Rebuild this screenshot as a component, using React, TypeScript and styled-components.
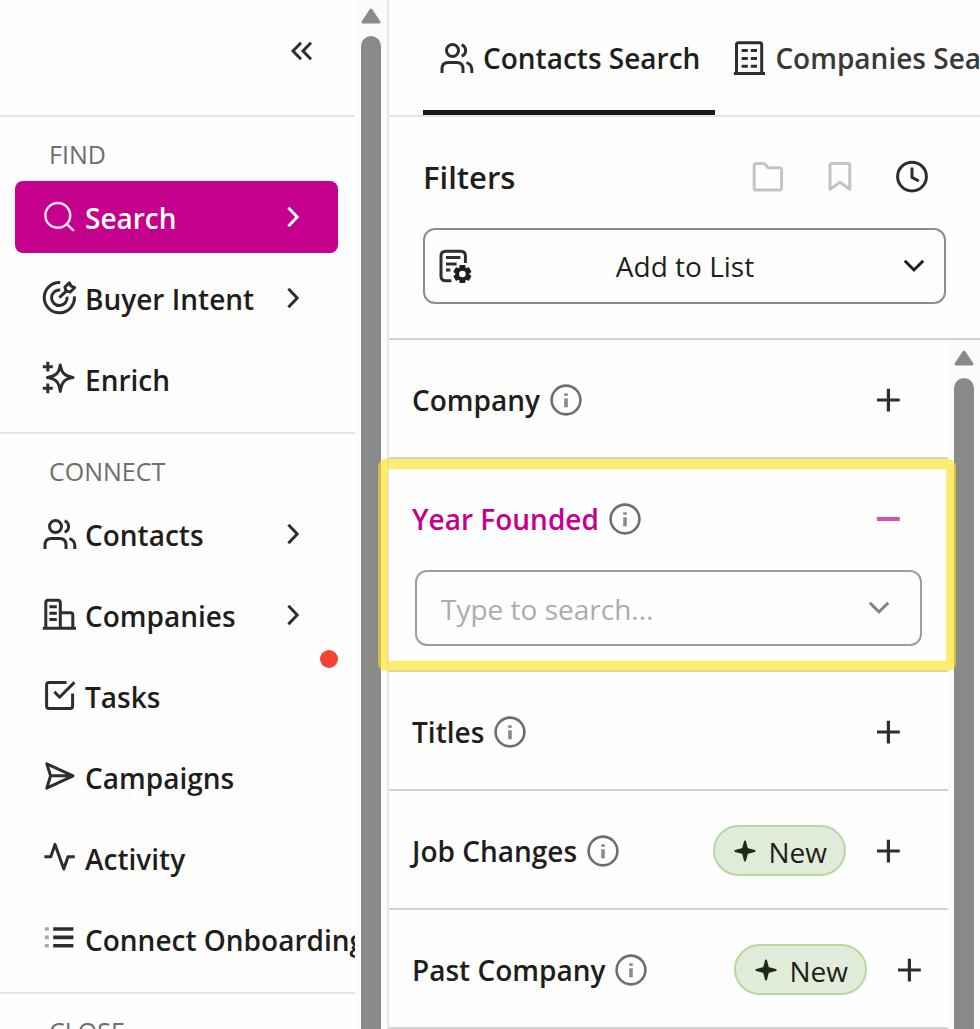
import React from "react";
import styled, { createGlobalStyle, css } from "styled-components";

const color = {
  ink: "#1f1e1c",
  icon: "#2f2e2b",
  muted: "#6f6e69",
  faint: "#c4c3bf",
  magenta: "#c4008c",
  line: "#e6e5e0",
  rowLine: "#d3d2cc",
  field: "#8f8b86",
  track: "#fbfbfb",
  thumb: "#8a8a8a",
};

const GlobalStyle = createGlobalStyle`
  * { box-sizing: border-box; }
  body {
    margin: 0;
    background: #fefefe;
    color: ${color.ink};
    font-family: "Open Sans", "Noto Sans", sans-serif;
    font-size: 28px;
    line-height: 36px;
  }
  button, input { font: inherit; color: inherit; }
  svg { display: block; flex: none; }
`;

const Shell = styled.div`
  display: flex;
  height: 100vh;
  overflow: hidden;
`;

/* ---------- scroll bars ---------- */

const Track = styled.div<{ $edge?: boolean; $top: number }>`
  flex: none;
  display: flex;
  flex-direction: column;
  align-items: center;
  gap: 12px;
  width: ${(p) => (p.$edge ? 34 : 32)}px;
  padding-top: ${(p) => p.$top}px;
  background: ${color.track};
  border-right: ${(p) => (p.$edge ? `2px solid ${color.line}` : "none")};
`;

const Thumb = styled.div`
  flex: 1;
  width: 20px;
  border-radius: 10px 10px 0 0;
  background: ${color.thumb};
`;

function ScrollBar({ edge, top }: { edge?: boolean; top: number }) {
  return (
    <Track $edge={edge} $top={top} aria-hidden="true">
      <svg width="20" height="16" viewBox="0 0 20 16">
        <path d="M10 2 L18 14 H2 Z" fill={color.thumb} stroke={color.thumb} strokeWidth="3" strokeLinejoin="round" />
      </svg>
      <Thumb />
    </Track>
  );
}

/* ---------- icons ---------- */

const Svg = styled.svg.attrs({ width: 36, height: 36, viewBox: "0 0 36 36", "aria-hidden": true })<{
  $tone?: string;
  $weight?: number;
}>`
  fill: none;
  stroke: ${(p) => p.$tone ?? color.icon};
  stroke-width: ${(p) => p.$weight ?? 3};
  stroke-linejoin: round;
`;

const SearchIcon = () => (
  <Svg $tone="#fbe0f2" $weight={2.5}>
    <circle cx="15.8" cy="16.4" r="12.4" />
    <path d="M25 25.4 L31.2 31.2" strokeLinecap="round" />
  </Svg>
);

const TargetIcon = () => (
  <Svg>
    <path d="M18.2 2.6 A15.1 15.1 0 1 0 32.4 16.4" />
    <path d="M18.2 10 A7.8 7.8 0 1 0 25.1 16.8" />
    <path d="M17.3 17.7 L25 10.4" />
    <path d="M24 10.9 L22.9 7 L27.4 2.8 L29 6 L32.6 7.7 L28.2 12 Z" />
  </Svg>
);

const SparklesIcon = () => (
  <Svg>
    <path d="M18.3 4 C19.6 12 22.4 15 31 16.4 C22.4 17.8 19.6 21 18.3 30.4 C17 21 14.2 17.8 5.4 16.4 C14.2 15 17 12 18.3 4 Z" />
    <path d="M5.8 0.8 V10.6 M0.8 5.7 H10.8 M5.8 22.4 V32.2 M0.8 27.3 H10.8" />
  </Svg>
);

const UsersIcon = () => (
  <Svg>
    <circle cx="13.5" cy="10.5" r="6" />
    <path d="M3 33 V29 Q3 22.4 9.4 22.4 H17.6 Q24 22.4 24 29 V33" />
    <path d="M22.6 4.9 A6 6 0 0 1 22.6 16.2 M27.4 22.6 Q32.6 24 32.8 29.4 V33" />
  </Svg>
);

const CompanyIcon = () => (
  <Svg>
    <path d="M3.8 31 V5.8 Q3.8 3.3 6.3 3.3 H15.8 Q18.3 3.3 18.3 5.8 V31 M18.3 15.7 H28.6 Q30.8 15.7 30.8 18 V31" />
    <path d="M0.8 31.2 H34" />
    <path d="M7.4 9.8 H14.8 M7.4 16.2 H14.8 M7.4 22.4 H14.8" />
  </Svg>
);

const TaskIcon = () => (
  <Svg>
    <path d="M24.6 4.6 H7 Q4.6 4.6 4.6 7 V28 Q4.6 30.4 7 30.4 H28.2 Q30.6 30.4 30.6 28 V15.4" />
    <path d="M12.4 13.8 L17.6 19.2 L32.4 4.4" />
  </Svg>
);

const SendIcon = () => (
  <Svg>
    <path d="M4.8 4.8 L31 16.8 L4.8 29.2 L8.6 16.8 Z M8.6 16.8 H30" />
  </Svg>
);

const ActivityIcon = () => (
  <Svg>
    <path d="M2.4 16.8 H8.8 L13 4.4 L21.8 29 L26 16.8 H32.8" />
  </Svg>
);

const ListIcon = () => (
  <Svg $weight={3.6}>
    <path d="M11.2 8 H31.4 M11.2 16.4 H31.4 M11.2 24.8 H31.4" />
    <path d="M2.8 8 H6.8 M2.8 16.4 H6.8 M2.8 24.8 H6.8" opacity="0.4" />
  </Svg>
);

const OfficeIcon = () => (
  <Svg>
    <path d="M5.5 34 V4.8 Q5.5 2.8 7.5 2.8 H28.7 Q30.7 2.8 30.7 4.8 V34" />
    <path d="M2.8 33.5 H34" />
    <path d="M10.6 10.4 H16.8 M19.8 10.4 H26 M10.6 18.4 H16.8 M19.8 18.4 H26 M10.6 26.2 H16.8 M19.8 26.2 H26" />
  </Svg>
);

const FolderIcon = () => (
  <Svg $tone={color.faint}>
    <path d="M4.2 6.4 Q4.2 4.4 6.2 4.4 H14.4 L18 8.8 H29.6 Q31.6 8.8 31.6 10.8 V29 Q31.6 31 29.6 31 H6.2 Q4.2 31 4.2 29 Z" />
  </Svg>
);

const BookmarkIcon = () => (
  <Svg $tone={color.faint}>
    <path d="M8 6.4 Q8 4.4 10 4.4 H25.8 Q27.8 4.4 27.8 6.4 V30.4 L18 23.2 L8 30.4 Z" />
  </Svg>
);

const ClockIcon = () => (
  <Svg>
    <circle cx="18" cy="17.6" r="14.4" />
    <path d="M18 8.6 V18.4 L24.8 22" />
  </Svg>
);

const gearTeeth = [0, 60, 120, 180, 240, 300];

const ListGearIcon = () => (
  <Svg>
    <path d="M28.4 15 V8 Q28.4 3.2 23.6 3.2 H8.8 Q4 3.2 4 8 V28 Q4 32.8 8.8 32.8 H14.4" />
    <path d="M9 9.6 H23.4 M9 16 H19.6 M9 22 H13.4" />
    <circle cx="25.4" cy="26" r="4.8" stroke={color.ink} />
    <g fill={color.ink} stroke="none">
      {gearTeeth.map((angle) => (
        <rect key={angle} x="22.4" y="17" width="6" height="4.4" rx="1" transform={`rotate(${angle} 25.4 26)`} />
      ))}
    </g>
    <circle cx="25.4" cy="26" r="5.6" stroke={color.ink} />
  </Svg>
);

const InfoIcon = () => (
  <Svg $tone={color.muted} $weight={2.6}>
    <circle cx="18" cy="18" r="14.4" />
    <g opacity="0.8">
      <path d="M16.2 12.6 H19.8" />
      <path d="M16.2 20.8 H19.8" style={{ strokeWidth: 9 }} />
    </g>
  </Svg>
);

const PlusIcon = () => (
  <Svg $weight={3.2}>
    <path d="M18.4 6.8 V29.4 M7 18 H29.8" />
  </Svg>
);

const MinusIcon = () => (
  <Svg $tone="#d94fb0" $weight={4}>
    <path d="M7 18 H29.8" />
  </Svg>
);

const Chevron = styled.svg.attrs({ "aria-hidden": true })`
  fill: none;
  stroke: currentColor;
  stroke-width: 3;
`;

const ChevronRight = () => (
  <Chevron width="12" height="22" viewBox="0 0 12 22">
    <path d="M1.4 1.8 L10.2 11 L1.4 20.2" />
  </Chevron>
);

const ChevronDown = () => (
  <Chevron width="22" height="14" viewBox="0 0 22 14">
    <path d="M1.8 1.8 L11 11 L20.2 1.8" />
  </Chevron>
);

/* ---------- side bar ---------- */

const SideBar = styled.aside`
  flex: none;
  width: 355px;
  overflow: hidden;
`;

const SideHeader = styled.div`
  display: flex;
  align-items: center;
  justify-content: flex-end;
  height: 117px;
  padding: 0 42px 13px 0;
  border-bottom: 2px solid ${color.line};
`;

const IconButton = styled.button`
  display: flex;
  flex: none;
  padding: 0;
  border: 0;
  background: none;
  cursor: pointer;
`;

const NavSection = styled.nav`
  padding: 22px 17px 17px 15px;
  border-bottom: 2px solid ${color.line};
`;

const NavTitle = styled.h2`
  margin: 0 0 12px 34px;
  color: ${color.muted};
  font-size: 25px;
  font-weight: 500;
  line-height: 30px;
`;

const NavList = styled.ul`
  display: flex;
  flex-direction: column;
  gap: 9px;
  margin: 0;
  padding: 0;
  list-style: none;
`;

const NavItem = styled.li`
  position: relative;
`;

const NavLink = styled.a<{ $active?: boolean }>`
  display: flex;
  align-items: center;
  gap: 7px;
  height: 72px;
  padding: 0 39px 0 27px;
  border-radius: 8px;
  color: ${color.icon};
  text-decoration: none;
  white-space: nowrap;
  ${(p) =>
    p.$active &&
    css`
      background: ${color.magenta};
      color: #fff;
    `}
`;

const NavLabel = styled.span<{ $active?: boolean }>`
  flex: 1;
  padding-top: 2px;
  color: ${(p) => (p.$active ? "#fff" : color.ink)};
  font-weight: 600;
`;

const Dot = styled.span`
  position: absolute;
  top: -10px;
  right: 0;
  width: 18px;
  height: 18px;
  border-radius: 50%;
  background: #f44336;
`;

type Entry = { label: string; icon: React.ReactNode; more?: boolean; active?: boolean; alert?: boolean };

const sections: { title: string; items: Entry[] }[] = [
  {
    title: "FIND",
    items: [
      { label: "Search", icon: <SearchIcon />, more: true, active: true },
      { label: "Buyer Intent", icon: <TargetIcon />, more: true },
      { label: "Enrich", icon: <SparklesIcon /> },
    ],
  },
  {
    title: "CONNECT",
    items: [
      { label: "Contacts", icon: <UsersIcon />, more: true },
      { label: "Companies", icon: <CompanyIcon />, more: true },
      { label: "Tasks", icon: <TaskIcon />, alert: true },
      { label: "Campaigns", icon: <SendIcon /> },
      { label: "Activity", icon: <ActivityIcon /> },
      { label: "Connect Onboarding", icon: <ListIcon /> },
    ],
  },
  { title: "CLOSE", items: [] },
];

/* ---------- main panel ---------- */

const Main = styled.main`
  flex: 1;
  display: flex;
  flex-direction: column;
  min-width: 0;
`;

const Tabs = styled.div`
  display: flex;
  flex: none;
  height: 117px;
  padding-left: 34px;
  overflow: hidden;
  border-bottom: 2px solid ${color.line};
`;

const Tab = styled.button<{ $active?: boolean }>`
  display: flex;
  flex: none;
  align-items: center;
  gap: 8px;
  padding: 5px 15px 0 16px;
  border: 0;
  border-bottom: 5px solid ${(p) => (p.$active ? "#1b1a16" : "transparent")};
  background: none;
  color: ${(p) => (p.$active ? color.ink : "#3a3936")};
  font-weight: 600;
  white-space: nowrap;
  cursor: pointer;
`;

const FilterHead = styled.section`
  display: flex;
  flex: none;
  flex-direction: column;
  gap: 30px;
  padding: 39px 34px 34px;
  border-bottom: 2px solid ${color.rowLine};
`;

const TitleBar = styled.div`
  display: flex;
  align-items: center;
  gap: 36px;
  padding-right: 16px;
`;

const Title = styled.h1`
  flex: 1;
  margin: 0;
  font-size: 31px;
  font-weight: 600;
  line-height: 42px;
`;

const AddButton = styled.button`
  display: flex;
  align-items: center;
  height: 76px;
  padding: 0 19px 0 12px;
  border: 2px solid ${color.field};
  border-radius: 12px;
  background: none;
  cursor: pointer;
`;

const Grow = styled.span`
  flex: 1;
  padding-right: 6px;
  text-align: center;
`;

const ListArea = styled.div`
  display: flex;
  flex: 1;
  min-height: 0;
`;

const FilterList = styled.div`
  flex: 1;
  min-width: 0;
`;

const FilterItem = styled.section`
  position: relative;
  border-bottom: 2px solid ${color.rowLine};
`;

const FilterRow = styled.div<{ $wide?: boolean }>`
  display: flex;
  align-items: center;
  gap: 8px;
  height: 117px;
  padding: 2px ${(p) => (p.$wide ? 21 : 42)}px 0 23px;
`;

const FilterName = styled.h3<{ $open?: boolean }>`
  margin: 0;
  color: ${(p) => (p.$open ? color.magenta : color.ink)};
  font-size: 28px;
  font-weight: 600;
`;

const Actions = styled.div`
  display: flex;
  flex: 1;
  align-items: center;
  justify-content: flex-end;
  gap: 24px;
`;

const Badge = styled.span`
  display: flex;
  align-items: center;
  gap: 12px;
  height: 51px;
  padding: 0 17px 0 19px;
  border: 2px solid #b6d7a1;
  border-radius: 26px;
  background: #e0ecd9;
  font-weight: 500;
`;

const BadgeText = styled.span`
  padding-top: 3px;
`;

const Combo = styled.label`
  display: flex;
  align-items: center;
  height: 76px;
  margin: -6px 26px 24px;
  padding: 0 30px 0 24px;
  border: 2px solid #a09f97;
  border-radius: 12px;
  color: #85827d;
`;

const ComboInput = styled.input`
  flex: 1;
  min-width: 0;
  padding: 2px 0 0;
  border: 0;
  outline: 0;
  background: none;
  &::placeholder {
    color: #adaca8;
    opacity: 1;
  }
`;

const Highlight = styled.div`
  position: absolute;
  z-index: 1;
  inset: 0 -8px -1px -11px;
  border: 10px solid rgba(255, 226, 24, 0.62);
  border-radius: 8px;
  pointer-events: none;
`;

const filters = [
  { name: "Company" },
  { name: "Year Founded", open: true },
  { name: "Titles" },
  { name: "Job Changes", isNew: true },
  { name: "Past Company", isNew: true, wide: true },
];

function NewBadge() {
  return (
    <Badge>
      <svg width="22" height="22" viewBox="0 0 22 22" aria-hidden="true">
        <path d="M11 1.4 L13 9 L20.6 11 L13 13 L11 20.6 L9 13 L1.4 11 L9 9 Z" fill="#1d2a14" stroke="#1d2a14" strokeWidth="2" strokeLinejoin="round" />
      </svg>
      <BadgeText>New</BadgeText>
    </Badge>
  );
}

export default function App() {
  return (
    <Shell>
      <GlobalStyle />
      <SideBar>
        <SideHeader>
          <IconButton aria-label="Collapse side bar">
            <Chevron width="22" height="20" viewBox="0 0 22 20" color={color.icon}>
              <path d="M10 1.8 L2 10 L10 18.2 M20 1.8 L12 10 L20 18.2" />
            </Chevron>
          </IconButton>
        </SideHeader>
        {sections.map((section) => (
          <NavSection key={section.title} aria-label={section.title}>
            <NavTitle>{section.title}</NavTitle>
            <NavList>
              {section.items.map((item) => (
                <NavItem key={item.label}>
                  <NavLink href="#" $active={item.active}>
                    {item.icon}
                    <NavLabel $active={item.active}>{item.label}</NavLabel>
                    {item.more && <ChevronRight />}
                  </NavLink>
                  {item.alert && <Dot />}
                </NavItem>
              ))}
            </NavList>
          </NavSection>
        ))}
      </SideBar>
      <ScrollBar edge top={8} />
      <Main>
        <Tabs role="tablist">
          <Tab role="tab" aria-selected="true" $active>
            <UsersIcon />
            Contacts Search
          </Tab>
          <Tab role="tab" aria-selected="false">
            <OfficeIcon />
            Companies Search
          </Tab>
        </Tabs>
        <FilterHead>
          <TitleBar>
            <Title>Filters</Title>
            <IconButton aria-label="Folders"><FolderIcon /></IconButton>
            <IconButton aria-label="Saved filters"><BookmarkIcon /></IconButton>
            <IconButton aria-label="History"><ClockIcon /></IconButton>
          </TitleBar>
          <AddButton>
            <ListGearIcon />
            <Grow>Add to List</Grow>
            <ChevronDown />
          </AddButton>
        </FilterHead>
        <ListArea>
          <FilterList>
            {filters.map((filter) => (
              <FilterItem key={filter.name}>
                <FilterRow $wide={filter.wide}>
                  <FilterName $open={filter.open}>{filter.name}</FilterName>
                  <InfoIcon />
                  <Actions>
                    {filter.isNew && <NewBadge />}
                    <IconButton aria-label={`${filter.open ? "Collapse" : "Expand"} ${filter.name}`}>
                      {filter.open ? <MinusIcon /> : <PlusIcon />}
                    </IconButton>
                  </Actions>
                </FilterRow>
                {filter.open && (
                  <>
                    <Combo>
                      <ComboInput aria-label={filter.name} placeholder="Type to search..." />
                      <ChevronDown />
                    </Combo>
                    <Highlight />
                  </>
                )}
              </FilterItem>
            ))}
          </FilterList>
          <ScrollBar top={10} />
        </ListArea>
      </Main>
    </Shell>
  );
}
